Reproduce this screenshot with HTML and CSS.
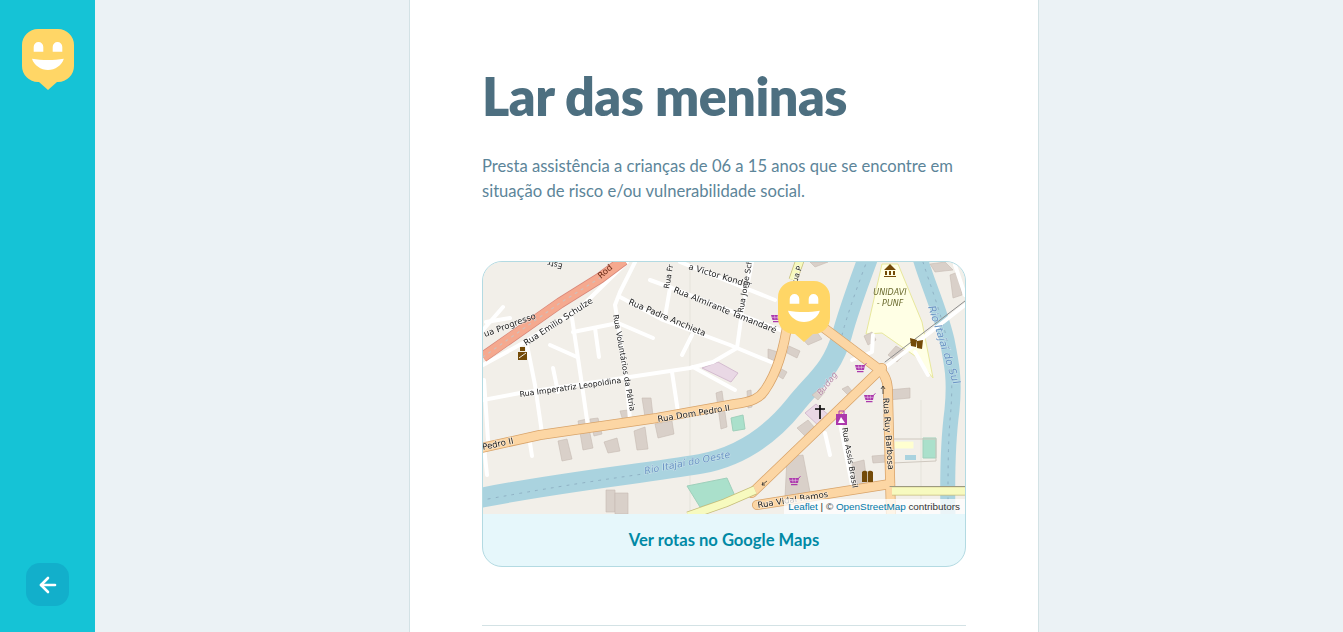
FILE: index.html
```html
<!DOCTYPE html>
<html lang="pt-BR">
  <head>
    <meta charset="UTF-8" />
    <meta name="viewport" content="width=device-width, initial-scale=1.0" />
    <title>Lar das meninas</title>
    <link rel="stylesheet" href="styles.css">
  </head>
  <body>
    <svg class="defs" width="0" height="0">
      <symbol id="smile" viewBox="0 0 52 61">
        <path fill="#ffd666" d="M16 0H36A16 16 0 0 1 52 16V37A16 16 0 0 1 36 53H35L26 61L17 53H16A16 16 0 0 1 0 37V16A16 16 0 0 1 16 0Z" />
        <path fill="#fff" d="M11.7 22.7V18A4.8 5 0 0 1 21.3 18V22.7ZM30.7 22.7V18A4.8 5 0 0 1 40.3 18V22.7Z" />
        <path fill="#fff" d="M10 29.8C20 31.4 32 31.4 41.8 29.8C40 36.5 33 41 26 41C19 41 12 36.5 10 29.8Z" />
      </symbol>
      <symbol id="basket" viewBox="0 0 12 11">
        <path fill="none" stroke="#ac39ac" stroke-width="1" d="M11.5 0.5L9.5 2" />
        <path fill="#ac39ac" d="M0 2H10L9 7H1.5Z" />
        <path fill="none" stroke="#e8c8e8" stroke-width="0.6" d="M3.5 2.5L4 6.5M6.5 2.5L6.3 6.5M1 4.3H9.4" />
        <path fill="none" stroke="#ac39ac" stroke-width="1.3" d="M2 8.6H8.5" />
      </symbol>
    </svg>

    <aside class="sidebar">
      <svg class="logo"><use href="#smile" /></svg>
      <button class="back" type="button" aria-label="Voltar">
        <svg width="24" height="24" viewBox="0 0 24 24" fill="none" stroke="#fff" stroke-width="2.6" stroke-linecap="round" stroke-linejoin="round">
          <path d="M19 12H5" />
          <path d="M12 19L5 12L12 5" />
        </svg>
      </button>
    </aside>

    <main class="content">
      <article class="card">
        <h1>Lar das meninas</h1>
        <p class="about">Presta assistência a crianças de 06 a 15 anos que se encontre em situação de risco e/ou vulnerabilidade social.</p>

        <div class="map-box">
          <div class="map">
            <svg class="map-art" viewBox="483 262 482 252" width="482" height="252">
              <rect x="483" y="262" width="482" height="252" fill="#f2efe9" />
              <path class="line-faint" d="M690 262V514" />
              <path class="line-faint" d="M921 400V514" />

              <!-- areas -->
              <path class="campus" d="M882 264H898L922 322L933 378L915 356L882 333L866 334Z" />
              <path class="pink" d="M702 368L718 362L738 373L731 382Z" />
              <path class="pink" d="M805 413L816 404L832 418L820 427Z" />
              <path class="green" d="M687 486L727 478L735 496L700 507Z" />
              <path class="green" d="M731 418L743 415L745 429L733 431Z" />
              <path class="green" d="M923 438H936V458H923Z" />
              <path class="pale" d="M894 441H914V449H894Z" />
              <path class="lake" d="M905 455H916V460H905Z" />
              <path class="plot" d="M892 439H936V461L892 463Z" />

              <!-- rivers -->
              <path class="river" d="M480 498C560 482 640 474 700 464C745 456 775 430 795 405C815 380 832 370 842 335C848 312 858 285 868 258" />
              <path class="river thin" d="M920 258C928 285 940 310 947 340C952 365 955 380 952 410C948 440 947 470 948 515" />
              <path class="river-dots" d="M488 499C560 486 600 480 650 473" />
              <path class="river-dots" d="M842 335C848 312 858 285 868 258" />
              <path class="river-dots" d="M923 262C930 285 942 315 948 345C952 365 953 390 950 420C948 445 948 470 948 510" />

              <!-- buildings -->
              <g class="bld">
                <path d="M558 441L567 439L572 459L562 461Z" />
                <path d="M578 421L587 419L593 448L583 450Z" />
                <path d="M590 419L598 418L602 434L594 436Z" />
                <path d="M604 442L617 438L620 451L608 453Z" />
                <path d="M620 411L628 410L631 419L623 421Z" />
                <path d="M634 431L645 427L648 449L637 450Z" />
                <path d="M642 398L651 398L653 416L645 417Z" />
                <path d="M655 424L672 421L674 434L658 438Z" />
                <path d="M716 393L722 391L727 427L721 429Z" />
                <path d="M747 391L751 390L752 407L748 408Z" />
                <path d="M606 490H615V512H606Z" />
                <path d="M615 493H628V514H615Z" />
                <path d="M768 349L778 352L775 361L768 358Z" />
                <path d="M778 367L787 372L783 379L775 374Z" />
                <path d="M789 346L800 351L797 358L787 353Z" />
                <path d="M800 336L816 331L822 339L808 345Z" />
                <path d="M797 428L808 420L815 428L805 436Z" />
                <path d="M812 395L821 388L825 392L818 400Z" />
                <path d="M842 389L848 386L856 396L851 398Z" />
                <path d="M888 390L910 388V398L888 400Z" />
                <path d="M864 336L872 332L876 340L868 345Z" />
                <path d="M888 355L896 346L906 352L897 362Z" />
                <path d="M785 497L787 457L803 455L810 492Z" />
                <path d="M852 463L864 460L868 490L855 490Z" />
                <path d="M872 456L886 455V462L873 463Z" />
                <path d="M930 264L945 262L953 270L935 272Z" />
                <path d="M950 275L958 272L962 295L953 298Z" />
                <path d="M810 262L828 262L815 267Z" />
              </g>

              <!-- small roads -->
              <g class="road">
                <path d="M483 365L523 343L580 308L627 262" />
                <path d="M635 262L620 292L615 305L618 323L627 385L630 420" />
                <path d="M572 318L582 385L588 427" />
                <path d="M573 332L618 323L653 338" />
                <path d="M595 328L599 357" />
                <path d="M550 345L577 357" />
                <path d="M527 345L535 385L542 433" />
                <path d="M530 443L532 456" />
                <path d="M553 368L558 392" />
                <path d="M484 380L488 440" />
                <path d="M484 447L487 475" />
                <path d="M483 400L520 393L623 378L690 368L713 362L737 348" />
                <path d="M620 297L663 320L730 345L737 348L778 365" />
                <path d="M650 280L672 288L780 330" />
                <path d="M680 262L775 300" />
                <path d="M670 288L665 317" />
                <path d="M692 335L682 355" />
                <path d="M737 348L742 312L752 262" />
                <path d="M693 367L735 390" />
                <path d="M672 372L678 412" />
                <path d="M483 330L503 307" />
                <path d="M486 322L510 318" />
                <path d="M825 433L830 455" />
                <path d="M873 335L872 352L852 360" />
                <path d="M915 352L928 375" />
                <path d="M955 265L960 280L965 295" />
                <path d="M882 370L965 305" />
                <path d="M840 423L852 485" />
              </g>
              <path class="rail" d="M885 362L965 301" />
              <path class="rail" d="M825 325L880 368" />

              <!-- main roads -->
              <path class="trunk-case" d="M483 357L560 303L600 278L624 260" />
              <path class="trunk" d="M483 357L560 303L600 278L624 260" />
              <path class="trunk-dash" d="M483 357L560 303L600 278" />

              <g class="main-case">
                <path d="M481 448L540 435L657 418L735 404C752 402 760 398 765 390C776 374 784 350 788 320" />
                <path d="M820 325L880 370C887 377 888 385 888 395L891 516" />
                <path d="M882 368L752 493" />
                <path d="M757 505L890 484" />
              </g>
              <g class="main">
                <path d="M481 448L540 435L657 418L735 404C752 402 760 398 765 390C776 374 784 350 788 320" />
                <path d="M820 325L880 370C887 377 888 385 888 395L891 516" />
                <path d="M882 368L752 493" />
                <path d="M757 505L890 484" />
              </g>

              <path class="yellow-case" d="M800 260L793 280" />
              <path class="yellow" d="M800 260L793 280" />
              <path class="yellow-case" d="M688 516L725 503L755 490" />
              <path class="yellow" d="M688 516L725 503L755 490" />
              <path class="yellow-case" d="M892 491H968" />
              <path class="yellow" d="M892 491H968" />
              <path class="rail thin-rail" d="M890 486.5H965" />

              <!-- labels -->
              <g class="labels">
                <text class="sm" transform="translate(563,264) rotate(194)">Estr</text>
                <text class="on-trunk" transform="translate(601,279) rotate(-42)">Rod</text>
                <text transform="translate(485,337) rotate(-20)">ua Progresso</text>
                <text transform="translate(526,346) rotate(-33)">Rua Emilio Schulze</text>
                <text class="sm" transform="translate(613,315) rotate(80)">Rua Voluntários da Pátria</text>
                <text transform="translate(628,304) rotate(23)">Rua Padre Anchieta</text>
                <text transform="translate(673,292) rotate(22)">Rua Almirante Tamandaré</text>
                <text transform="translate(688,269) rotate(17)">a Victor Konder</text>
                <text class="sm" transform="translate(669,289) rotate(-80)">Rua Fr</text>
                <text class="sm" transform="translate(743,313) rotate(-80)">Rua Jorge Sch</text>
                <text class="sm" transform="translate(520,397) rotate(-8)">Rua Imperatriz Leopoldina</text>
                <text transform="translate(658,422) rotate(-9)">Rua Dom Pedro II</text>
                <text transform="translate(483,450) rotate(-12)">Pedro II</text>
                <text transform="translate(883,398) rotate(86)">Rua Ruy Barbosa</text>
                <text class="sm" transform="translate(842,428) rotate(80)">Rua Assis Brasil</text>
                <text transform="translate(758,508) rotate(-9)">Rua Vidal Ramos</text>
                <text class="sm" transform="translate(797,283) rotate(-72)">ua P</text>
              </g>
              <g class="water">
                <text transform="translate(645,474) rotate(-11)">Rio Itajaí do Oeste</text>
                <text class="wide" transform="translate(928,307) rotate(72)">Rio Itajaí do Sul</text>
                <text class="purple" transform="translate(821,396) rotate(-52)">Budag</text>
              </g>
              <text class="campus-name" x="890" y="295">UNIDAVI</text>
              <text class="campus-name" x="890" y="306">- PUNF</text>

              <!-- poi -->
              <use href="#basket" x="771" y="313" width="12" height="11" />
              <use href="#basket" x="855" y="363" width="12" height="11" />
              <use href="#basket" x="864" y="393" width="12" height="11" />
              <use href="#basket" x="789" y="476" width="12" height="11" />
              <rect x="836" y="414" width="11" height="11" fill="#ac39ac" />
              <path d="M839 414V411H844V414" fill="none" stroke="#ac39ac" />
              <path d="M838 423L841 417L845 423Z" fill="#fff" />
              <path d="M820 405V419M815 409H825" stroke="#000" stroke-width="1.6" fill="none" />
              <path d="M862 472C864 470 866 471 867.5 472C869 471 871 470 873 472V482H862Z" fill="#734a08" />
              <path d="M867.5 472V482" stroke="#f2efe9" stroke-width=".7" />
              <path d="M884 270L890 264L896 270ZM885 271H887V275H885ZM889 271H891V275H889ZM893 271H895V275H893ZM884 276H896V277H884Z" fill="#734a08" />
              <path d="M910 338L917 340L916 347L911 346ZM917 341L923 340L922 349L917 348Z" fill="#734a08" />
              <path d="M520 347H525V351H520ZM518 352H527V360H518Z" fill="#734a08" />
              <path d="M519 358L526 353" stroke="#f2efe9" />
              <path d="M883 386V394M881 389L883 386L885 389" fill="none" stroke="#333" stroke-width=".8" />
              <path d="M762 485L767 481M762 485L765 485M762 485L763 482" fill="none" stroke="#333" stroke-width=".8" />
            </svg>
            <svg class="pin"><use href="#smile" /></svg>
            <div class="attribution"><a>Leaflet</a> | © <a>OpenStreetMap</a> contributors</div>
          </div>
          <a class="routes">Ver rotas no Google Maps</a>
        </div>

        <hr class="divider" />
      </article>
    </main>
  </body>
</html>
```

FILE: styles.css
```css
* {
  box-sizing: border-box;
}
body {
  margin: 0;
  height: 100vh;
  overflow: hidden;
  display: flex;
  background-color: #ebf2f5;
  font-family: Lato, "Open Sans", sans-serif;
}
.defs {
  position: absolute;
}
.sidebar {
  width: 95px;
  flex-shrink: 0;
  display: flex;
  flex-direction: column;
  align-items: center;
  justify-content: space-between;
  padding: 29px 0 26px;
  background-color: #15c3d6;
}
.logo {
  width: 52px;
  height: 61px;
}
.back {
  width: 43px;
  height: 43px;
  display: flex;
  align-items: center;
  justify-content: center;
  padding: 0;
  border: none;
  border-radius: 14px;
  background-color: #12afcb;
  cursor: pointer;
}
.content {
  flex: 1;
  padding-left: 314px;
}
.card {
  width: 630px;
  height: 100%;
  padding: 0 72px;
  background-color: #fff;
  border-left: 1px solid #d3e2e5;
  border-right: 1px solid #d3e2e5;
}
h1 {
  margin: 0;
  padding-top: 64px;
  font-size: 52px;
  line-height: 64px;
  font-weight: 800;
  letter-spacing: -0.5px;
  color: #4d6f80;
}
.about {
  margin: 26px 0 0;
  font-size: 16.6px;
  line-height: 25px;
  color: #5c8599;
}
.map-box {
  margin-top: 57px;
  border: 1px solid #b3dae2;
  border-radius: 20px;
  background-color: #e6f7fb;
  overflow: hidden;
}
.map {
  position: relative;
  height: 252px;
}
.map-art {
  display: block;
  filter: blur(0.3px);
}
.pin {
  position: absolute;
  left: 295px;
  top: 19px;
  width: 52px;
  height: 61px;
}
.attribution {
  position: absolute;
  right: 0;
  bottom: 0;
  padding: 0 5px 0 4px;
  font-family: "Liberation Sans", sans-serif;
  font-size: 9.9px;
  line-height: 15px;
  color: #333;
  background-color: rgba(255, 255, 255, 0.75);
}
.attribution a {
  color: #0078a8;
}
.routes {
  display: block;
  height: 52px;
  font-size: 16.6px;
  line-height: 52px;
  font-weight: 700;
  text-align: center;
  color: #0089a5;
}
.divider {
  margin: 58px 0 0;
  border: none;
  height: 1px;
  background-color: #d3e2e5;
}

/* map drawing */
.campus {
  fill: #ffffe5;
  stroke: #e8e89c;
}
.pink {
  fill: #e9d8e5;
  stroke: #d4bcd0;
}
.green {
  fill: #aae0cb;
  stroke: #9fd0bb;
}
.pale {
  fill: #ffffd0;
  stroke: #eee;
}
.lake {
  fill: #aad3df;
}
.plot {
  fill: none;
  stroke: #cfc8bf;
}
.line-faint {
  fill: none;
  stroke: #dcdad3;
  stroke-width: 0.6;
}
.river,
.river-dots,
.road,
.rail,
.trunk,
.trunk-case,
.trunk-dash,
.yellow,
.yellow-case,
.main,
.main-case {
  fill: none;
  stroke-linecap: round;
  stroke-linejoin: round;
}
.river {
  stroke: #aad3df;
  stroke-width: 20;
  stroke-linecap: butt;
}
.river.thin {
  stroke-width: 15;
}
.river-dots {
  stroke: #8fb1c4;
  stroke-width: 1;
  stroke-dasharray: 2 6;
}
.bld path {
  fill: #d9d0c9;
  stroke: #c6bab1;
  stroke-width: 0.6;
}
.road path {
  fill: none;
  stroke: #fff;
  stroke-width: 4;
  stroke-linecap: round;
  stroke-linejoin: round;
}
.rail {
  stroke: #8d8d8d;
  stroke-width: 1;
}
.thin-rail {
  stroke: #9d9a80;
}
.trunk-case {
  stroke: #d9887a;
  stroke-width: 11;
  stroke-linecap: butt;
}
.trunk {
  stroke: #f5a98f;
  stroke-width: 9.5;
  stroke-linecap: butt;
}
.trunk-dash {
  stroke: #cfc0bb;
  stroke-width: 1.2;
  stroke-dasharray: 2 5;
}
.yellow-case {
  stroke: #c6bd7a;
  stroke-width: 9;
  stroke-linecap: butt;
}
.yellow {
  stroke: #f7fabf;
  stroke-width: 7.5;
  stroke-linecap: butt;
}
.main-case path {
  fill: none;
  stroke: #d8a369;
  stroke-width: 10;
  stroke-linejoin: round;
}
.main path {
  fill: none;
  stroke: #fcd6a4;
  stroke-width: 8.5;
  stroke-linejoin: round;
}
.labels text {
  font-family: "DejaVu Sans", sans-serif;
  font-size: 8.5px;
  fill: #222;
  stroke: rgba(255, 255, 255, 0.6);
  stroke-width: 1.2px;
  paint-order: stroke;
}
.labels .sm {
  font-size: 7.8px;
}
.labels .on-trunk {
  fill: #6a2b16;
  stroke: none;
}
.water text {
  font-family: "DejaVu Sans", sans-serif;
  font-style: italic;
  font-size: 9.5px;
  fill: #6a94c4;
  stroke: rgba(255, 255, 255, 0.4);
  stroke-width: 1px;
  paint-order: stroke;
}
.water .wide {
  font-size: 10.5px;
}
.water .purple {
  font-size: 8.5px;
  fill: #b78aa8;
}
.campus-name {
  font-family: "DejaVu Sans", sans-serif;
  font-style: italic;
  font-size: 8px;
  text-anchor: middle;
  fill: #6b6b2f;
}
```
